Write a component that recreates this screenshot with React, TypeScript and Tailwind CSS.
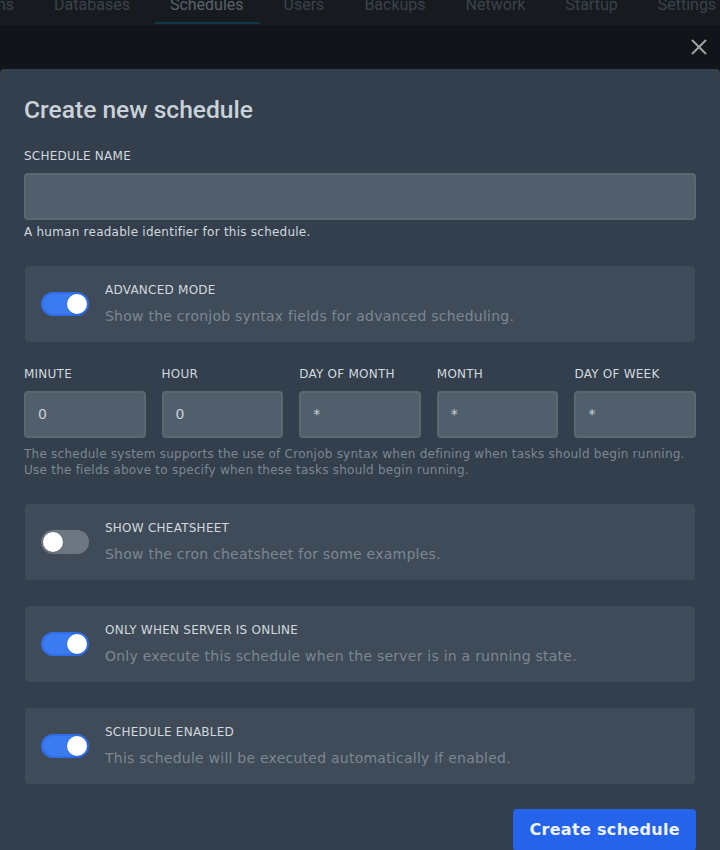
import { useState } from "react"

const TABS = ["ns", "Databases", "Schedules", "Users", "Backups", "Network", "Startup", "Settings"]

function Toggle({ on, onClick }: { on: boolean; onClick: () => void }) {
  return (
    <button
      type="button"
      onClick={onClick}
      className={`relative h-6 w-12 shrink-0 rounded-full border-2 transition-colors ${on ? "border-[#2f6ee8] bg-[#3b7bf0]" : "border-[#6c7782] bg-[#6c7782]"}`}
    >
      <span className={`absolute top-0 size-5 rounded-full bg-white shadow ${on ? "left-[24px]" : "left-0"}`} />
    </button>
  )
}

function ToggleCard({ label, desc, on, onClick }: { label: string; desc: string; on: boolean; onClick: () => void }) {
  return (
    <div className="mx-px flex items-center gap-4 rounded bg-[#3f4b58] px-4 py-4">
      <Toggle on={on} onClick={onClick} />
      <div className="flex-1">
        <p className="text-[12px] leading-4 uppercase tracking-[0.02em] text-[#d1d8df]">{label}</p>
        <p className="mt-2 text-[14px] leading-5 tracking-[0.017em] text-[#7c8792]">{desc}</p>
      </div>
    </div>
  )
}

function CronField({ label, value }: { label: string; value: string }) {
  return (
    <div>
      <p className="mb-[9px] text-[12px] leading-4 uppercase tracking-[0.02em] text-[#d1d8df]">{label}</p>
      <div className="flex h-[47px] items-center rounded border-2 border-[#5b6874] bg-[#515e6b] px-3 text-[14px] text-[#cad1d8]">
        {value}
      </div>
    </div>
  )
}

export default function App() {
  const [advanced, setAdvanced] = useState(true)
  const [cheat, setCheat] = useState(false)
  const [online, setOnline] = useState(true)
  const [enabled, setEnabled] = useState(true)

  return (
    <div className="h-[850px] w-[720px] overflow-hidden bg-[#111418] font-['DejaVu_Sans',sans-serif]">
      {/* dimmed nav behind the modal */}
      <div className="relative h-[25px] overflow-hidden bg-[#171b20] font-['Roboto',sans-serif] text-[16px] leading-6 text-[#3b424a]">
        <div className="absolute -top-[7px] left-0 flex whitespace-nowrap">
          {TABS.map((t, i) => (
            <span key={t} className={`relative px-5 ${i === 0 ? "-ml-[3px] pl-0" : ""} ${t === "Schedules" ? "text-[#59616a]" : ""}`}>
              {t}
              {t === "Schedules" && <span className="absolute bottom-[-7px] left-[5px] right-[4px] h-[2px] bg-[#0f3a45]" />}
            </span>
          ))}
        </div>
      </div>

      <div className="flex h-[44px] items-center justify-end pr-[12px]">
        <svg width="18" height="18" viewBox="0 0 18 18" className="text-[#9ea3a8]">
          <path d="M2 2 L16 16 M16 2 L2 16" stroke="currentColor" strokeWidth="2" />
        </svg>
      </div>

      {/* modal */}
      <div className="rounded-t bg-[#333f4c] px-6 pt-[26px]">
        <h2 className="font-['Roboto',sans-serif] text-[24.6px] font-medium leading-[30px] text-[#cad1d8]">Create new schedule</h2>

        <div className="mt-[23px]">
          <p className="text-[12px] leading-4 uppercase tracking-[0.02em] text-[#d1d8df]">Schedule name</p>
          <div className="mt-[9px] h-[47px] rounded border-2 border-[#5b6874] bg-[#515e6b]" />
          <p className="mt-[4px] text-[12px] leading-4 tracking-[0.02em] text-[#d1d8df]">A human readable identifier for this schedule.</p>
        </div>

        <div className="mt-[26px]">
          <ToggleCard
            label="Advanced mode"
            desc="Show the cronjob syntax fields for advanced scheduling."
            on={advanced}
            onClick={() => setAdvanced(!advanced)}
          />
        </div>

        <div className="mt-[24px] grid grid-cols-5 gap-4">
          <CronField label="Minute" value="0" />
          <CronField label="Hour" value="0" />
          <CronField label="Day of month" value="*" />
          <CronField label="Month" value="*" />
          <CronField label="Day of week" value="*" />
        </div>
        <p className="mt-[8px] text-[12px] leading-4 tracking-[0.02em] text-[#7c8792]">
          The schedule system supports the use of Cronjob syntax when defining when tasks should begin running.
          <br />
          Use the fields above to specify when these tasks should begin running.
        </p>

        <div className="mt-[26px] flex flex-col gap-[26px]">
          <ToggleCard
            label="Show cheatsheet"
            desc="Show the cron cheatsheet for some examples."
            on={cheat}
            onClick={() => setCheat(!cheat)}
          />
          <ToggleCard
            label="Only when server is online"
            desc="Only execute this schedule when the server is in a running state."
            on={online}
            onClick={() => setOnline(!online)}
          />
          <ToggleCard
            label="Schedule enabled"
            desc="This schedule will be executed automatically if enabled."
            on={enabled}
            onClick={() => setEnabled(!enabled)}
          />
        </div>

        <div className="mt-[25px] flex justify-end pb-6">
          <button className="h-[42px] rounded bg-[#2563eb] px-4 text-[16px] font-bold tracking-[0.02em] text-[#eef3fb]">
            Create schedule
          </button>
        </div>
      </div>
    </div>
  )
}
